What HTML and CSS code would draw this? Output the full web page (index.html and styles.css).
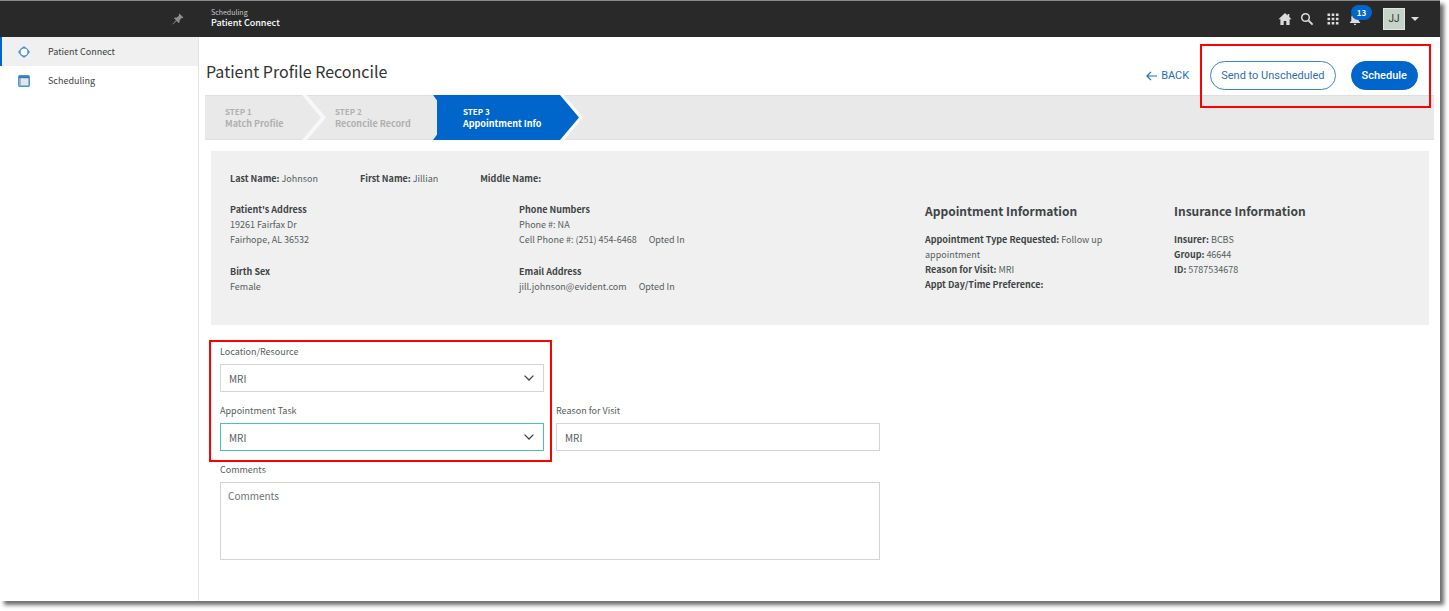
FILE: index.html
```html
<!DOCTYPE html>
<html lang="en">
<head>
    <meta charset="UTF-8">
    <meta name="viewport" content="width=device-width, initial-scale=1.0">
    <title>Patient Connect</title>
    <link rel="stylesheet" href="styles.css">
</head>
<body>
    <div class="window">
        <header class="topbar">
            <div class="topbar-left">
                <button class="icon-button" aria-label="Pin menu">
                    <svg width="12" height="12" viewBox="0 0 12 12"><path fill="#8d8d8d" d="M7.4 0.6L11.4 4.6L10.4 5.2L9.6 5L7.6 7.2L7.6 9.2L6.7 10L4.6 7.9L0.8 11.4L0.5 11.1L4 7.3L2 5.3L2.8 4.4L4.9 4.4L7 2.4L6.8 1.5Z"/></svg>
                </button>
            </div>
            <div class="app-title">
                <span class="app-group">Scheduling</span>
                <span class="app-name">Patient Connect</span>
            </div>
            <nav class="topbar-icons" aria-label="Tools">
                <button class="icon-button" aria-label="Home">
                    <svg width="14" height="14" viewBox="0 0 14 14"><path fill="#dcdcdc" d="M7 1L0.5 7.2H2.4V13H5.7V9H8.3V13H11.6V7.2H13.5L11.3 5.1V2H9.6V3.5Z"/></svg>
                </button>
                <button class="icon-button search" aria-label="Search">
                    <svg width="14" height="14" viewBox="0 0 14 14"><circle cx="5.5" cy="5.5" r="3.8" fill="none" stroke="#dcdcdc" stroke-width="1.5"/><path d="M8.4 8.4L12.6 12.6" stroke="#dcdcdc" stroke-width="1.9"/></svg>
                </button>
                <button class="icon-button apps" aria-label="Apps">
                    <svg width="12" height="12" viewBox="0 0 12 12" fill="#dcdcdc"><path d="M0.5 0.5h2.6v2.6H0.5zM4.7 0.5h2.6v2.6H4.7zM8.9 0.5h2.6v2.6H8.9zM0.5 4.7h2.6v2.6H0.5zM4.7 4.7h2.6v2.6H4.7zM8.9 4.7h2.6v2.6H8.9zM0.5 8.9h2.6v2.6H0.5zM4.7 8.9h2.6v2.6H4.7zM8.9 8.9h2.6v2.6H8.9z"/></svg>
                </button>
                <button class="icon-button bell" aria-label="Notifications">
                    <svg width="12" height="14" viewBox="0 0 12 14" fill="#dcdcdc"><path d="M6 1.2C3.6 1.5 2.3 3.3 2.3 5.6V8.8L0.8 10.4V11H11.2V10.4L9.7 8.8V5.6C9.7 3.3 8.4 1.5 6 1.2ZM4.7 11.7C4.8 12.5 5.3 13 6 13S7.2 12.5 7.3 11.7Z"/></svg>
                    <span class="badge">13</span>
                </button>
                <button class="user-menu">
                    <span class="avatar">JJ</span>
                    <span class="caret"></span>
                </button>
            </nav>
        </header>

        <div class="layout">
            <nav class="sidebar" aria-label="Main menu">
                <a href="#" class="menu-item active">
                    <svg width="12" height="12" viewBox="0 0 12 12"><circle cx="6" cy="6" r="4.1" fill="#fff" stroke="#5b9bd5" stroke-width="1.4"/><path fill="#4a90d2" d="M3.8 2.2L6 0L8.2 2.2ZM3.8 9.8L6 12L8.2 9.8ZM2.2 3.8L0 6L2.2 8.2ZM9.8 3.8L12 6L9.8 8.2Z"/></svg>
                    Patient Connect
                </a>
                <a href="#" class="menu-item">
                    <svg width="12" height="12" viewBox="0 0 12 12"><rect x="0.8" y="0.8" width="10.4" height="10.4" rx="1" fill="#e6e6e6" stroke="#4a90d2" stroke-width="1.5"/><path d="M1 2.2H11" stroke="#2f76bd" stroke-width="2"/><path d="M2.4 3V11" stroke="#82b3e0" stroke-width="1"/></svg>
                    Scheduling
                </a>
            </nav>

            <main class="content">
                <div class="page-header">
                    <h1>Patient Profile Reconcile</h1>
                    <a href="#" class="back-link">
                        <svg width="11" height="10" viewBox="0 0 11 10" fill="none" stroke="#1f6fb8" stroke-width="1.2"><path d="M11 5H1M5 0.8L0.9 5L5 9.2"/></svg>
                        BACK
                    </a>
                    <div class="actions callout">
                        <button class="btn btn-outline">Send to Unscheduled</button>
                        <button class="btn btn-primary">Schedule</button>
                    </div>
                </div>

                <ol class="steps">
                    <li class="step step-match">
                        <span class="step-number">STEP 1</span>
                        <span class="step-name">Match Profile</span>
                    </li>
                    <li class="step step-reconcile">
                        <span class="step-number">STEP 2</span>
                        <span class="step-name">Reconcile Record</span>
                    </li>
                    <li class="step step-current" aria-current="step">
                        <span class="step-number">STEP 3</span>
                        <span class="step-name">Appointment Info</span>
                    </li>
                </ol>

                <section class="patient">
                    <div class="names">
                        <span><b>Last Name:</b> Johnson</span>
                        <span><b>First Name:</b> Jillian</span>
                        <span><b>Middle Name:</b></span>
                    </div>
                    <div class="details">
                        <div>
                            <p><b>Patient's Address</b><br>19261 Fairfax Dr<br>Fairhope, AL 36532</p>
                            <p><b>Birth Sex</b><br>Female</p>
                        </div>
                        <div>
                            <p><b>Phone Numbers</b><br>Phone #: NA<br>Cell Phone #: (251) 454-6468 <span class="opted">Opted In</span></p>
                            <p><b>Email Address</b><br>jill.johnson@evident.com <span class="opted">Opted In</span></p>
                        </div>
                        <div class="appointment">
                            <h2>Appointment Information</h2>
                            <p>
                                <b>Appointment Type Requested:</b> Follow up appointment<br>
                                <b>Reason for Visit:</b> MRI<br>
                                <b>Appt Day/Time Preference:</b>
                            </p>
                        </div>
                        <div>
                            <h2>Insurance Information</h2>
                            <p>
                                <b>Insurer:</b> BCBS<br>
                                <b>Group:</b> 46644<br>
                                <b>ID:</b> 5787534678
                            </p>
                        </div>
                    </div>
                </section>

                <form class="form">
                    <div class="form-row">
                        <div class="form-group callout">
                            <div class="field">
                                <label for="location">Location/Resource</label>
                                <div class="select-wrap">
                                    <select id="location"><option>MRI</option></select>
                                    <svg class="chevron" width="10" height="6" viewBox="0 0 10 6" fill="none" stroke="#444" stroke-width="1.3"><path d="M0.6 0.6L5 5L9.4 0.6"/></svg>
                                </div>
                            </div>
                            <div class="field">
                                <label for="task">Appointment Task</label>
                                <div class="select-wrap">
                                    <select id="task" class="focused"><option>MRI</option></select>
                                    <svg class="chevron" width="10" height="6" viewBox="0 0 10 6" fill="none" stroke="#444" stroke-width="1.3"><path d="M0.6 0.6L5 5L9.4 0.6"/></svg>
                                </div>
                            </div>
                        </div>
                        <div class="field">
                            <label for="reason">Reason for Visit</label>
                            <input type="text" id="reason" value="MRI">
                        </div>
                    </div>
                    <div class="field">
                        <label for="comments">Comments</label>
                        <textarea id="comments" placeholder="Comments"></textarea>
                    </div>
                </form>
            </main>
        </div>
    </div>
</body>
</html>
```

FILE: styles.css
```css
* {
    box-sizing: border-box;
}

body {
    margin: 0;
    padding: 0 9px 10px 0;
    background-color: #fff;
    font-family: "Noto Sans CJK JP", "Noto Sans", sans-serif;
    font-size: 9px;
    line-height: 15px;
    color: #565e5e;
}

button, input, select, textarea {
    font-family: inherit;
    font-size: 10px;
    color: inherit;
}

button {
    cursor: pointer;
}

a {
    text-decoration: none;
}

svg {
    display: block;
    flex: none;
}

b {
    color: #3d4545;
}

.window {
    display: flex;
    flex-direction: column;
    min-height: calc(100vh - 10px);
    background-color: #fff;
    box-shadow: 4px 4px 4px #6e6e6e;
}

/* top bar */
.topbar {
    display: flex;
    align-items: center;
    height: 37px;
    background-color: #292929;
    border-top: 1px solid #8a8a8a;
}

.topbar-left {
    display: flex;
    justify-content: flex-end;
    width: 199px;
    padding-right: 15px;
}

.icon-button {
    position: relative;
    padding: 0;
    border: none;
    background: none;
}

.app-title {
    display: flex;
    flex-direction: column;
    flex: 1;
    padding: 0 0 2px 12px;
    color: #fff;
    line-height: 11px;
}

.app-group {
    font-size: 7px;
    line-height: 9px;
    color: #c8c8c8;
}

.app-name {
    font-weight: 500;
}

.topbar-icons {
    display: flex;
    align-items: center;
    padding-right: 21px;
}

.search {
    margin-left: 8px;
}

.apps {
    margin-left: 13px;
}

.bell {
    margin-left: 10px;
}

.badge {
    position: absolute;
    left: 2px;
    top: -7px;
    width: 21px;
    border-radius: 8px;
    background-color: #0066cc;
    color: #fff;
    font-size: 8px;
    font-weight: bold;
    line-height: 15px;
    text-align: center;
}

.user-menu {
    display: flex;
    align-items: center;
    gap: 6px;
    margin-left: 22px;
    padding: 0;
    border: none;
    background: none;
}

.avatar {
    width: 22px;
    border: 1px solid #e0e6e0;
    background-color: #c5d3c9;
    color: #333;
    font-family: Roboto, sans-serif;
    line-height: 20px;
}

.caret {
    border: 4px solid transparent;
    border-top-color: #dcdcdc;
    border-bottom: none;
}

/* side menu */
.layout {
    display: flex;
    flex: 1;
}

.sidebar {
    width: 199px;
    border-right: 1px solid #e4e4e4;
}

.menu-item {
    display: flex;
    align-items: center;
    gap: 18px;
    height: 29px;
    padding-left: 18px;
    color: #3a3f44;
}

.menu-item.active {
    background-color: #f0f0f0;
    border-left: 2px solid #0066cc;
    padding-left: 16px;
}

/* page */
.content {
    flex: 1;
    min-width: 0;
}

.page-header {
    display: flex;
    align-items: center;
    padding: 24px 22px 5px 7px;
}

h1 {
    flex: 1;
    margin: 0 0 9px;
    color: #333;
    font-size: 16px;
    font-weight: normal;
    line-height: 20px;
}

.back-link {
    display: flex;
    align-items: center;
    gap: 4px;
    margin-right: 21px;
    color: #1f6fb8;
    font-family: Roboto, sans-serif;
    font-size: 11px;
}

.actions {
    display: flex;
    gap: 15px;
}

.btn {
    height: 29px;
    padding: 0 10px;
    border: 1px solid #0066cc;
    border-radius: 15px;
    font-family: Roboto, sans-serif;
    font-size: 11px;
}

.btn-outline {
    background-color: #fff;
    border-color: #3a86c8;
    color: #2d6fae;
}

.btn-primary {
    background-color: #0066cc;
    color: #fff;
    font-weight: 500;
}

/* red frame round the controls being explained */
.callout {
    position: relative;
}

.callout::after {
    content: "";
    position: absolute;
    inset: -17px -13px -18px -10px;
    border: 2px solid #ff0000;
    pointer-events: none;
}

.form-group.callout::after {
    inset: -4px -8px -11px -11px;
}

/* steps */
.steps {
    display: flex;
    height: 45px;
    margin: 0 6px;
    padding: 0;
    list-style: none;
    background-color: #e9e9e9;
    border: 1px solid #e0e0e0;
    border-width: 1px 0;
}

.step {
    position: relative;
    display: flex;
    flex-direction: column;
    justify-content: center;
    margin: -1px 0;
    color: #b0b0b0;
    font-weight: bold;
    line-height: 12px;
}

.step-number {
    font-size: 8px;
}

.step-match {
    width: 110px;
    padding-left: 20px;
}

.step-reconcile {
    width: 118px;
    padding-left: 20px;
}

.step-current {
    width: 150px;
    padding-left: 30px;
    color: #fff;
    background-color: #fff;
    clip-path: polygon(0 0, 131px 0, 100% 50%, 131px 100%, 0 100%, 4px 88%, 4px 12%);
    z-index: 0;
}

.step-current::before {
    content: "";
    position: absolute;
    inset: 0 4px 0 0;
    background-color: #0066cc;
    clip-path: polygon(0 0, 127px 0, 100% 50%, 127px 100%, 0 100%);
    z-index: -1;
}

.step-match::after {
    content: "";
    position: absolute;
    left: 97px;
    top: 0;
    width: 24px;
    height: 100%;
    background-color: #f8f8f8;
    clip-path: polygon(0 0, 5px 0, 100% 50%, 5px 100%, 0 100%, 19px 50%);
}

/* patient panel */
.patient {
    margin: 11px 11px 0 12px;
    padding: 20px 19px 31px;
    background-color: #f0f0f0;
}

.names {
    display: flex;
    gap: 42px;
    margin-bottom: 16px;
}

.details {
    display: grid;
    grid-template-columns: 289fr 406fr 249fr 236fr;
}

.details p {
    margin: 0 0 17px;
}

.details p:last-child {
    margin-bottom: 0;
}

.opted {
    margin-left: 10px;
}

.appointment {
    padding-right: 40px;
}

h2 {
    margin: 0 0 13px;
    color: #3d4545;
    font-size: 12px;
    line-height: 17px;
    white-space: nowrap;
}

/* form */
.form {
    display: flex;
    flex-direction: column;
    gap: 11px;
    max-width: 660px;
    margin: 19px 0 0 21px;
}

.form-row {
    display: grid;
    grid-template-columns: 1fr 1fr;
    gap: 12px;
    align-items: end;
}

.form-group {
    display: flex;
    flex-direction: column;
    gap: 11px;
}

.field {
    display: flex;
    flex-direction: column;
    gap: 4px;
}

label {
    line-height: 16px;
}

.select-wrap {
    position: relative;
}

select, input, textarea {
    display: block;
    width: 100%;
    height: 28px;
    margin: 0;
    padding: 0 8px;
    border: 1px solid #d4d4d4;
    border-radius: 0;
    outline: none;
    background-color: #fff;
}

select {
    appearance: none;
}

select.focused {
    border-color: #4fbdb8;
}

textarea {
    height: 78px;
    padding: 5px 7px;
    line-height: 15px;
    resize: none;
}

textarea::placeholder {
    color: #6b7272;
}

.chevron {
    position: absolute;
    right: 10px;
    top: 11px;
    pointer-events: none;
}
```
